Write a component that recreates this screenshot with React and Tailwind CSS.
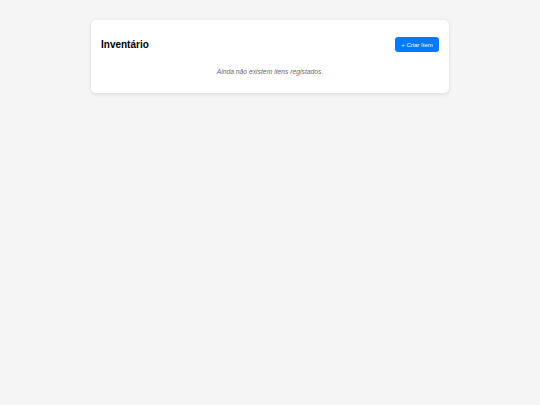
export default function App() {
  return (
    <div className="min-h-screen bg-[#f5f5f5] pt-[20px] font-['Liberation_Sans',Arial,sans-serif]">
      <div className="mx-auto w-[358px] rounded-[5px] bg-white px-[10px] pb-[16px] pt-[17px] shadow-[0_1px_4px_rgba(0,0,0,0.12)]">
        <div className="flex items-center justify-between">
          <h1 className="text-[10px] font-bold leading-none text-black">Inventário</h1>
          <button className="h-[15px] w-[44px] rounded-[3px] bg-[#007bff] text-[6px] leading-none text-white">
            + Criar Item
          </button>
        </div>
        <p className="mt-[15px] text-center text-[6.75px] italic leading-[10px] text-[#6c6c6c]">
          Ainda não existem itens registados.
        </p>
      </div>
    </div>
  );
}
